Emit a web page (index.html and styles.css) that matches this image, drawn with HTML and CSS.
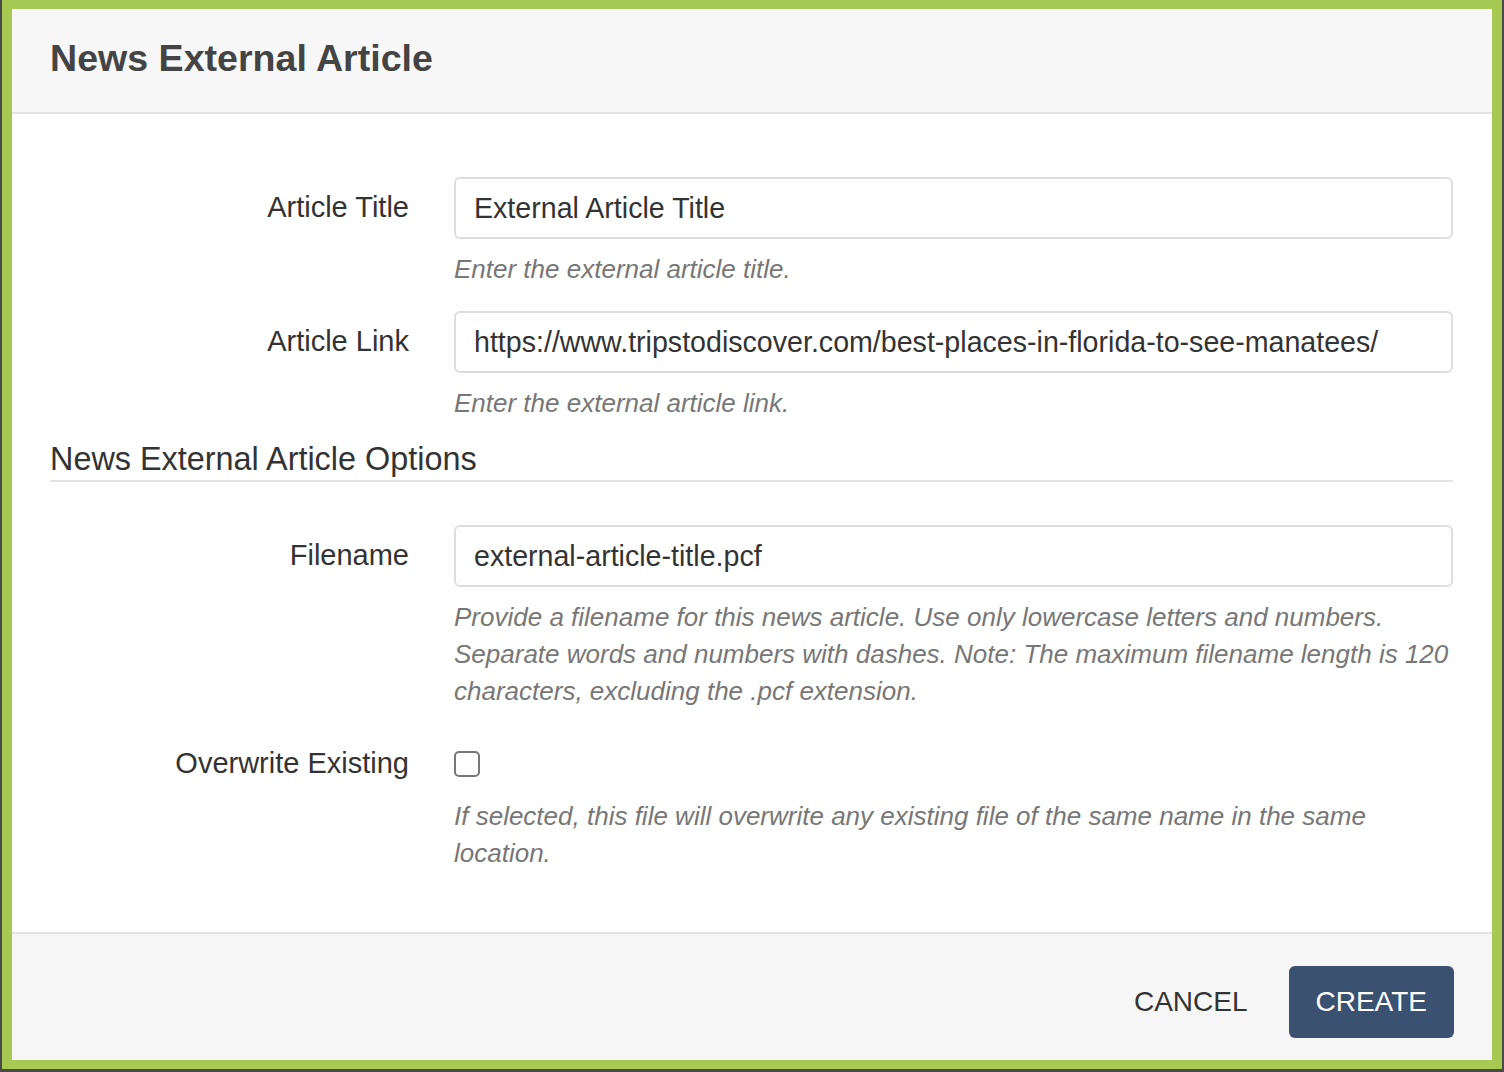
FILE: index.html
```html
<!DOCTYPE html>
<html lang="en">
<head>
  <meta charset="UTF-8">
  <title>News External Article</title>
  <link rel="stylesheet" href="styles.css">
</head>
<body>

  <div class="modal">
    <div class="modal-header">
      <h1>News External Article</h1>
    </div>

    <form class="modal-body">
      <div class="form-row">
        <label for="articleTitle">Article Title</label>
        <div class="field">
          <input type="text" id="articleTitle" value="External Article Title">
          <p class="help">Enter the external article title.</p>
        </div>
      </div>

      <div class="form-row">
        <label for="articleLink">Article Link</label>
        <div class="field">
          <input type="text" id="articleLink" value="https://www.tripstodiscover.com/best-places-in-florida-to-see-manatees/">
          <p class="help">Enter the external article link.</p>
        </div>
      </div>

      <h2 class="section-title">News External Article Options</h2>

      <div class="form-row">
        <label for="filename">Filename</label>
        <div class="field">
          <input type="text" id="filename" value="external-article-title.pcf">
          <p class="help">Provide a filename for this news article. Use only lowercase letters and numbers. Separate words and numbers with dashes. Note: The maximum filename length is 120 characters, excluding the .pcf extension.</p>
        </div>
      </div>

      <div class="form-row">
        <label for="overwrite">Overwrite Existing</label>
        <div class="field">
          <div class="check-wrap">
            <input type="checkbox" id="overwrite" class="checkbox">
          </div>
          <p class="help">If selected, this file will overwrite any existing file of the same name in the same location.</p>
        </div>
      </div>
    </form>

    <div class="modal-footer">
      <button type="button" class="btn btn-link">CANCEL</button>
      <button type="button" class="btn btn-primary">CREATE</button>
    </div>
  </div>

</body>
</html>
```

FILE: styles.css
```css
* {
  box-sizing: border-box;
}

body {
  margin: 0;
  padding: 0 2px 3px 2px;
  background: #4a4a4a;
  font-family: "Liberation Sans", Helvetica, Arial, sans-serif;
  color: #333;
}

.modal {
  background: #fff;
  border: solid #a6c953;
  border-width: 9px 10px 9px 10px;
}

.modal-header {
  background: #f7f7f7;
  border-bottom: 2px solid #e3e3e3;
  padding: 27px 38px 32px 38px;
}

.modal-header h1 {
  margin: 0;
  font-size: 37.6px;
  line-height: 44px;
  font-weight: bold;
  color: #444;
}

.modal-body {
  margin: 0;
  padding: 63px 39px 60px 38px;
}

.form-row {
  display: grid;
  grid-template-columns: 359px 1fr;
  column-gap: 45px;
  margin-bottom: 23px;
}

.form-row label {
  text-align: right;
  font-size: 29px;
  line-height: 56px;
  padding-top: 2px;
  color: #333;
}

.field input[type="text"] {
  display: block;
  width: 100%;
  height: 62px;
  padding: 0 18px;
  border: 2px solid #ddd;
  border-radius: 6px;
  font-family: inherit;
  font-size: 28.6px;
  color: #333;
  outline: none;
}

.help {
  margin: 12px 0 0 0;
  font-size: 26px;
  line-height: 37px;
  font-style: italic;
  color: #777;
}

.section-title {
  margin: -6px 0 43px 0;
  padding-bottom: 1px;
  border-bottom: 2px solid #e3e3e3;
  font-size: 32.4px;
  line-height: 40px;
  font-weight: normal;
  color: #333;
}

.check-wrap {
  height: 53px;
  padding-top: 18px;
}

.checkbox {
  appearance: none;
  -webkit-appearance: none;
  display: block;
  margin: 0;
  width: 26px;
  height: 26px;
  border: 2.5px solid #777;
  border-radius: 5px;
  background: #fff;
}

.form-row:last-child {
  margin-bottom: 0;
}

.modal-footer {
  background: #f6f6f6;
  border-top: 2px solid #e3e3e3;
  padding: 32px 38px 22px 38px;
  display: flex;
  justify-content: flex-end;
  gap: 14px;
}

.btn {
  height: 72px;
  padding: 0 27px;
  border: none;
  border-radius: 6px;
  font-family: inherit;
  font-size: 28px;
  cursor: pointer;
}

.btn-link {
  background: transparent;
  color: #333;
}

.btn-primary {
  background: #3a5172;
  color: #fff;
}
```
